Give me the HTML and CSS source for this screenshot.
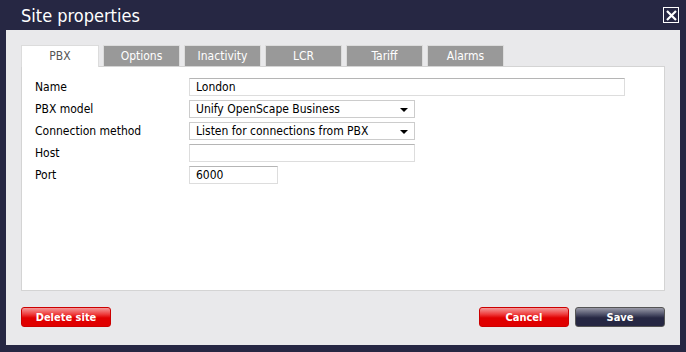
FILE: index.html
```html
<!DOCTYPE html>
<html lang="en-US">

<head>
  <meta charset="utf-8" />
  <title>Site properties</title>
  <link rel="stylesheet" href="styles.css">
</head>

<body>
  <div class="dialog">
    <header class="titlebar">
      <h1>Site properties</h1>
      <span class="close">
        <svg width="13" height="13" viewBox="0 0 13 13"><path d="M2 2 L11 11 M11 2 L2 11" stroke="#fff" stroke-width="2.2" /></svg>
      </span>
    </header>
    <main class="panel">
      <nav class="tabs">
        <span class="tab active">PBX</span>
        <span class="tab">Options</span>
        <span class="tab">Inactivity</span>
        <span class="tab">LCR</span>
        <span class="tab">Tariff</span>
        <span class="tab">Alarms</span>
      </nav>
      <section class="content">
        <div class="row">
          <label>Name</label>
          <div class="field wide">London</div>
        </div>
        <div class="row">
          <label>PBX model</label>
          <div class="field select">Unify OpenScape Business <i class="arrow"></i></div>
        </div>
        <div class="row">
          <label>Connection method</label>
          <div class="field select">Listen for connections from PBX <i class="arrow"></i></div>
        </div>
        <div class="row">
          <label>Host</label>
          <div class="field mid"></div>
        </div>
        <div class="row">
          <label>Port</label>
          <div class="field short">6000</div>
        </div>
      </section>
      <footer class="actions">
        <button class="btn red">Delete site</button>
        <span class="spacer"></span>
        <button class="btn red">Cancel</button>
        <button class="btn dark">Save</button>
      </footer>
    </main>
  </div>
</body>

</html>
```

FILE: styles.css
```css
html,
body {
  margin: 0;
  height: 100%;
}

body {
  background-color: #262743;
  font-family: "DejaVu Sans Condensed", "DejaVu Sans", Verdana, sans-serif;
  font-size: 12px;
  color: #000;
}

.titlebar {
  height: 30px;
  display: flex;
  align-items: flex-start;
  justify-content: space-between;
  padding: 0 7px 0 21px;
}

h1 {
  margin: 5px 0 0 0;
  font-size: 18px;
  font-weight: normal;
  color: #fff;
  line-height: 22px;
}

.close {
  margin-top: 7px;
  width: 14px;
  height: 14px;
  border: 1px solid #fff;
  display: flex;
  align-items: center;
  justify-content: center;
}

.panel {
  margin: 0 6px;
  height: 315px;
  box-sizing: border-box;
  background-color: #e9e9eb;
  padding: 15px 15px 0 15px;
}

.tabs {
  display: flex;
  gap: 4px;
  height: 21px;
}

.tab {
  width: 75px;
  height: 20px;
  border: 1px solid #dcdcdc;
  border-bottom: none;
  background-color: #999;
  color: #fff;
  text-align: center;
  line-height: 20px;
}

.tab.active {
  background-color: #fff;
  color: #555;
  height: 21px;
  width: 76px;
}

.content {
  height: 225px;
  box-sizing: border-box;
  background-color: #fff;
  border: 1px solid #d4d4d4;
  padding: 11px 13px;
}

.row {
  display: flex;
  align-items: center;
  height: 18px;
  margin-bottom: 4px;
}

label {
  width: 154px;
}

.field {
  height: 18px;
  box-sizing: border-box;
  border: 1px solid #ddd;
  border-top-color: #b5b5b5;
  padding: 0 6px;
  line-height: 16px;
  display: flex;
  align-items: center;
}

.wide {
  width: 436px;
}

.select,
.mid {
  width: 226px;
}

.select {
  justify-content: space-between;
  border-color: #ccc;
}

.short {
  width: 89px;
}

.arrow {
  width: 0;
  height: 0;
  border-left: 4px solid transparent;
  border-right: 4px solid transparent;
  border-top: 4px solid #000;
  margin-top: 2px;
}

.actions {
  display: flex;
  gap: 6px;
  margin-top: 16px;
}

.spacer {
  flex: 1;
}

.btn {
  width: 90px;
  height: 20px;
  border-radius: 3px;
  font-family: "DejaVu Sans Condensed", "DejaVu Sans", Verdana, sans-serif;
  font-size: 11px;
  font-weight: bold;
  color: #fff;
  padding: 0;
}

.red {
  border: 1px solid #c00;
  background: linear-gradient(#f49a9a 0%, #ee3c3c 35%, #e00000 55%, #e00000 100%);
}

.dark {
  border: 1px solid #555;
  background: linear-gradient(#9a9aa8 0%, #50526a 35%, #262743 55%, #262743 100%);
}
```
